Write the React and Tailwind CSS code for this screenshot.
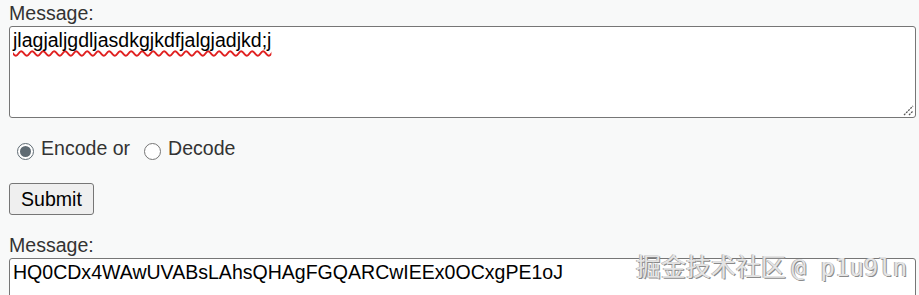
import { useState } from "react";

function Radio({ checked }) {
  return (
    <span
      className={
        "mt-[6px] inline-flex h-[17px] w-[17px] shrink-0 items-center justify-center rounded-full border bg-white " +
        (checked ? "border-[#5f6b73]" : "border-[#767676]")
      }
    >
      {checked && <span className="h-[11px] w-[11px] rounded-full bg-[#5f6b73]" />}
    </span>
  );
}

export default function App() {
  const [mode, setMode] = useState("encode");

  return (
    <div className="relative min-h-screen bg-[#f8f9f9] pl-[9px] pr-[3px] pt-[2px] font-['Liberation_Sans',Arial,sans-serif] text-[19.55px] leading-[22.3px] text-[#333]">
      {/* input */}
      <label className="block">Message:</label>
      <div className="relative mt-[1.7px] h-[92px] rounded-[3px] border border-[#767676] bg-white px-[3px] py-[2px] text-black">
        <span className="underline decoration-[#e02020] decoration-wavy decoration-2 underline-offset-[3px] [text-decoration-skip-ink:none]">
          jlagjaljgdljasdkgjkdfjalgjadjkd;j
        </span>
        <svg className="absolute bottom-[1px] right-[1px]" width="11" height="11" viewBox="0 0 11 11">
          <path d="M1 10 L10 1 M6 10 L10 6" stroke="#555" strokeWidth="1.3" strokeDasharray="2 1" fill="none" />
        </svg>
      </div>

      {/* mode */}
      <div className="mt-[19px] flex items-start">
        <label className="ml-[8px] flex cursor-pointer items-start" onClick={() => setMode("encode")}>
          <Radio checked={mode === "encode"} />
          <span className="ml-[7px]">Encode or</span>
        </label>
        <label className="ml-[14px] flex cursor-pointer items-start" onClick={() => setMode("decode")}>
          <Radio checked={mode === "decode"} />
          <span className="ml-[7px]">Decode</span>
        </label>
      </div>

      <button className="mt-[22.7px] block h-[32px] w-[85px] rounded-[3px] border border-[#767676] bg-[#efefef] text-center text-black">
        Submit
      </button>

      {/* output */}
      <label className="mt-[19px] block">Message:</label>
      <textarea
        readOnly
        className="mt-[1.7px] block h-[92px] w-full resize-y rounded-[3px] border border-[#767676] bg-white px-[3px] py-[2px] text-black outline-none"
        value="HQ0CDx4WAwUVABsLAhsQHAgFGQARCwIEEx0OCxgPE1oJ"
      />

      {/* watermark */}
      <div className="pointer-events-none absolute left-[636px] top-[250px] whitespace-nowrap font-['Noto_Sans_CJK_SC',sans-serif] text-[25px] leading-[30px] text-[#e4e4e4] [text-shadow:1px_1px_0_#8a8a8a,-1px_0_0_#b0b0b0]">
        掘金技术社区 <span className="font-['DejaVu_Sans_Mono','Noto_Sans_CJK_SC',monospace] text-[24px]">@ p1u9ln</span>
      </div>
    </div>
  );
}
